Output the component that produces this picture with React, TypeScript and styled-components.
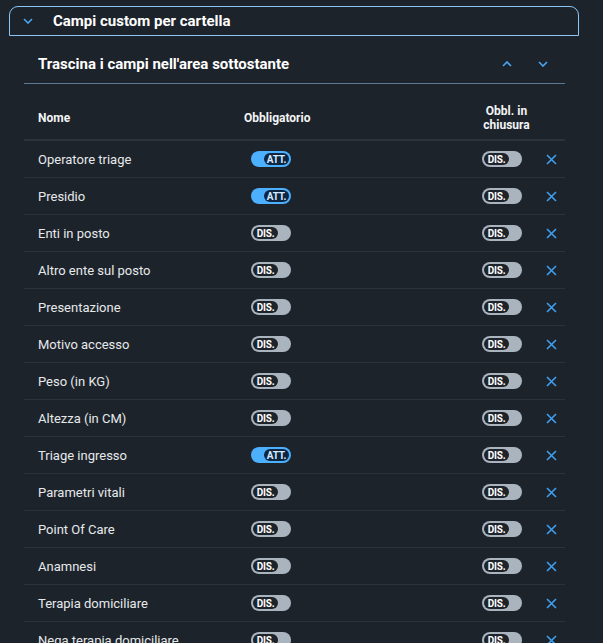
import React from "react";
import styled, { createGlobalStyle } from "styled-components";

interface Field {
  name: string;
  required: boolean;
  requiredOnClose: boolean;
}

const fields: Field[] = [
  { name: "Operatore triage", required: true, requiredOnClose: false },
  { name: "Presidio", required: true, requiredOnClose: false },
  { name: "Enti in posto", required: false, requiredOnClose: false },
  { name: "Altro ente sul posto", required: false, requiredOnClose: false },
  { name: "Presentazione", required: false, requiredOnClose: false },
  { name: "Motivo accesso", required: false, requiredOnClose: false },
  { name: "Peso (in KG)", required: false, requiredOnClose: false },
  { name: "Altezza (in CM)", required: false, requiredOnClose: false },
  { name: "Triage ingresso", required: true, requiredOnClose: false },
  { name: "Parametri vitali", required: false, requiredOnClose: false },
  { name: "Point Of Care", required: false, requiredOnClose: false },
  { name: "Anamnesi", required: false, requiredOnClose: false },
  { name: "Terapia domiciliare", required: false, requiredOnClose: false },
  { name: "Nega terapia domiciliare", required: false, requiredOnClose: false },
];

const ChevronDown = () => (
  <svg width="10" height="6" viewBox="0 0 10 6" fill="none">
    <polyline points="1,1 5,5 9,1" stroke="#4ba6f3" strokeWidth="1.6" />
  </svg>
);

const ChevronUp = () => (
  <svg width="10" height="6" viewBox="0 0 10 6" fill="none">
    <polyline points="1,5 5,1 9,5" stroke="#4ba6f3" strokeWidth="1.6" />
  </svg>
);

const CloseIcon = () => (
  <svg width="11" height="11" viewBox="0 0 11 11" fill="none">
    <path d="M1 1 L10 10 M10 1 L1 10" stroke="#3d9ff2" strokeWidth="1.6" />
  </svg>
);

const Toggle = ({ on }: { on: boolean }) => (
  <Track $on={on}>
    <Knob $on={on}>{on ? "ATT." : "DIS."}</Knob>
  </Track>
);

const App = () => {
  return (
    <>
      <GlobalStyle />
      <Page>
        <PanelHeader>
          <IconBox>
            <ChevronDown />
          </IconBox>
          <PanelTitle>Campi custom per cartella</PanelTitle>
        </PanelHeader>

        <Content>
          <SubHeader>
            <SubTitle>Trascina i campi nell'area sottostante</SubTitle>
            <Arrows>
              <IconButton>
                <ChevronUp />
              </IconButton>
              <IconButton>
                <ChevronDown />
              </IconButton>
            </Arrows>
          </SubHeader>

          <HeadRow>
            <HeadCell>Nome</HeadCell>
            <HeadCell>Obbligatorio</HeadCell>
            <HeadCell $center>Obbl. in chiusura</HeadCell>
            <div />
          </HeadRow>

          {fields.map((f) => (
            <Row key={f.name}>
              <Name>{f.name}</Name>
              <SwitchCell $indent={7}>
                <Toggle on={f.required} />
              </SwitchCell>
              <SwitchCell $indent={-1}>
                <Toggle on={f.requiredOnClose} />
              </SwitchCell>
              <RemoveCell>
                <CloseIcon />
              </RemoveCell>
            </Row>
          ))}
        </Content>
      </Page>
    </>
  );
};

export default App;

const GlobalStyle = createGlobalStyle`
  html, body {
    margin: 0;
    background: #1d232a;
  }
  body {
    font-family: Roboto, "Noto Sans", sans-serif;
    color: #e9ecef;
  }
`;

const Page = styled.div`
  padding: 6px 0 0 9px;
  height: 637px;
  overflow: hidden;
`;

const PanelHeader = styled.div`
  box-sizing: border-box;
  width: 570px;
  height: 30px;
  display: flex;
  align-items: center;
  gap: 20px;
  padding-left: 13px;
  border: 1px solid #8cc6f6;
  border-radius: 9px 9px 0 0;
`;

const IconBox = styled.div`
  width: 10px;
  display: flex;
  align-items: center;
  justify-content: center;
`;

const PanelTitle = styled.div`
  font-size: 15px;
  font-weight: 700;
  color: #ffffff;
`;

const Content = styled.div`
  width: 541px;
  margin-left: 15px;
`;

const SubHeader = styled.div`
  height: 38px;
  margin-top: 9px;
  padding: 0 12px 0 14px;
  display: flex;
  align-items: center;
  justify-content: space-between;
  border-bottom: 1px solid #5f7892;
`;

const SubTitle = styled.div`
  font-size: 15px;
  font-weight: 700;
  color: #ffffff;
`;

const Arrows = styled.div`
  display: flex;
  gap: 16px;
`;

const IconButton = styled.div`
  width: 20px;
  height: 20px;
  display: flex;
  align-items: center;
  justify-content: center;
`;

const Grid = styled.div`
  display: grid;
  grid-template-columns: 206px 239px 47px 35px;
  padding-left: 14px;
  align-items: center;
`;

const HeadRow = styled(Grid)`
  padding-top: 20px;
  padding-bottom: 7px;
  border-bottom: 2px solid #2c333c;
`;

const HeadCell = styled.div<{ $center?: boolean }>`
  font-size: 12px;
  font-weight: 700;
  line-height: 14px;
  color: #f2f4f6;
  text-align: ${(p) => (p.$center ? "center" : "left")};
`;

const Row = styled(Grid)`
  height: 36px;
  border-bottom: 1px solid #2b323a;
`;

const Name = styled.div`
  font-size: 13px;
  color: #e6e9ec;
  white-space: nowrap;
`;

const SwitchCell = styled.div<{ $indent: number }>`
  display: flex;
  margin-left: ${(p) => p.$indent}px;
`;

const RemoveCell = styled.div`
  display: flex;
  justify-content: flex-end;
  padding-right: 8px;
`;

const Track = styled.div<{ $on: boolean }>`
  box-sizing: border-box;
  width: 40px;
  height: 16px;
  border-radius: 8px;
  padding: 2px;
  display: flex;
  justify-content: ${(p) => (p.$on ? "flex-end" : "flex-start")};
  background: ${(p) => (p.$on ? "#4cb0ff" : "#aab4be")};
`;

const Knob = styled.div<{ $on: boolean }>`
  box-sizing: border-box;
  width: 25px;
  height: 12px;
  border-radius: 6px;
  display: flex;
  align-items: center;
  justify-content: center;
  font-size: 10px;
  font-weight: 700;
  letter-spacing: -0.2px;
  background: ${(p) => (p.$on ? "#0c2644" : "#1d232a")};
  color: ${(p) => (p.$on ? "#d8ecff" : "#ffffff")};
`;
